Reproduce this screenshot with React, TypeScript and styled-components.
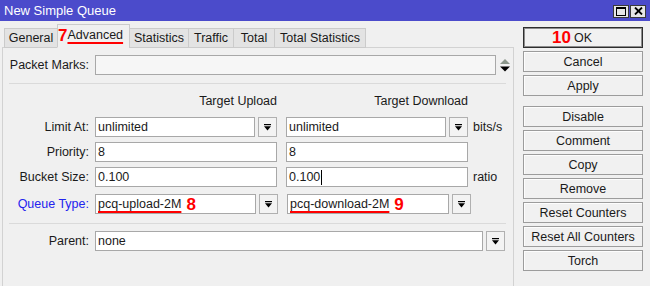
import React from 'react'
import styled, { createGlobalStyle } from 'styled-components'

const GlobalStyle = createGlobalStyle`
  html, body {
    margin: 0;
    padding: 0;
    background: #f0f0f0;
    overflow: hidden;
  }
  body {
    font-family: "Liberation Sans", Arial, sans-serif;
    font-size: 12.5px;
    color: #1a1a1a;
  }
`

const Window = styled.div`
  width: 650px;
  height: 286px;
  display: flex;
  flex-direction: column;
  background: #f0f0f0;
  overflow: hidden;
`

const TitleBar = styled.div`
  height: 21px;
  flex-shrink: 0;
  background: #4b4bcb;
  color: #fff;
  display: flex;
  align-items: center;
  justify-content: space-between;
  padding: 0 4px 0 4px;
`

const TitleText = styled.span`
  font-size: 13px;
`

const WinButtons = styled.div`
  display: flex;
  gap: 1px;
  margin-top: 1px;
`

const WinButton = styled.div`
  width: 14px;
  height: 11px;
  background: #e6e6e6;
  border: 1px solid #3a3a3a;
  display: flex;
  align-items: center;
  justify-content: center;
`

const Body = styled.div`
  flex: 1;
  display: flex;
  gap: 9px;
  padding-left: 2px;
  min-height: 0;
`

const Main = styled.div`
  width: 512px;
  display: flex;
  flex-direction: column;
`

const TabRow = styled.div`
  height: 27px;
  flex-shrink: 0;
  display: flex;
  align-items: flex-end;
  padding-left: 3px;
  margin-bottom: -1px;
  position: relative;
  z-index: 1;
`

const Tab = styled.div<{ $w: number; $active?: boolean }>`
  width: ${p => p.$w}px;
  height: ${p => (p.$active ? 24 : 20)}px;
  box-sizing: border-box;
  margin-left: -1px;
  display: flex;
  align-items: center;
  justify-content: ${p => (p.$active ? 'flex-start' : 'center')};
  background: ${p => (p.$active ? '#f0f0f0' : '#e3e3e3')};
  border: 1px solid #cbcbcb;
  border-bottom: ${p => (p.$active ? '1px solid #f0f0f0' : '1px solid #cbcbcb')};
  padding-bottom: ${p => (p.$active ? 2 : 0)}px;
  white-space: nowrap;
`

const Marker = styled.span`
  color: #ff0000;
  font-weight: bold;
  font-size: 17px;
  line-height: 1;
`

const FloatMarker = styled(Marker)`
  position: absolute;
  right: calc(100% + 3px);
  top: 50%;
  transform: translateY(-52%);
`

const Marked = styled.span`
  text-decoration-line: underline;
  text-decoration-color: #ff0000;
  text-decoration-thickness: 2px;
  text-underline-offset: 3px;
  text-decoration-skip-ink: none;
`

const Panel = styled.div`
  flex: 1;
  border: 1px solid #d2d2d2;
  border-bottom: none;
  background: #f0f0f0;
  padding-top: 7px;
  display: flex;
  flex-direction: column;
`

const FieldRow = styled.div<{ $mt?: number }>`
  height: 20px;
  margin-top: ${p => p.$mt ?? 0}px;
  display: flex;
  align-items: center;
`

const Label = styled.div<{ $link?: boolean }>`
  width: 86px;
  margin-right: 6px;
  flex-shrink: 0;
  text-align: right;
  white-space: nowrap;
  color: ${p => (p.$link ? '#2323ee' : '#1a1a1a')};
`

const Col = styled.div<{ $w: number; $ml?: number }>`
  width: ${p => p.$w}px;
  margin-left: ${p => p.$ml ?? 0}px;
  height: 100%;
  display: flex;
  gap: 3px;
  flex-shrink: 0;
`

const ColHead = styled.div<{ $w: number; $ml?: number }>`
  width: ${p => p.$w}px;
  margin-left: ${p => p.$ml ?? 0}px;
  text-align: right;
  white-space: nowrap;
`

const TextBox = styled.div<{ $empty?: boolean }>`
  flex: 1;
  height: 20px;
  box-sizing: border-box;
  border: 1px solid #a8a8a8;
  background: ${p => (p.$empty ? '#f6f6f6' : '#fff')};
  padding-left: 2px;
  display: flex;
  align-items: center;
  white-space: nowrap;
  overflow: hidden;
`

const DropButton = styled.div`
  width: 19px;
  height: 20px;
  box-sizing: border-box;
  flex-shrink: 0;
  border: 1px solid #b0b0b0;
  background: #f3f3f3;
  display: flex;
  align-items: center;
  justify-content: center;
`

const Spinner = styled.div`
  width: 17px;
  height: 20px;
  display: flex;
  align-items: center;
  justify-content: center;
`

const Unit = styled.span`
  margin-left: 5px;
`

const Caret = styled.span`
  display: inline-block;
  width: 1px;
  height: 15px;
  background: #000;
  margin-left: 1px;
`

const Divider = styled.div<{ $mt: number }>`
  height: 1px;
  background: #dadada;
  margin: ${p => p.$mt}px 7px 0 6px;
`

const Side = styled.div`
  width: 120px;
  display: flex;
  flex-direction: column;
  gap: 3px;
  padding-top: 6px;
`

const SideButton = styled.div<{ $default?: boolean; $mt?: number }>`
  height: 21px;
  box-sizing: border-box;
  margin-top: ${p => p.$mt ?? 0}px;
  border: 1px solid ${p => (p.$default ? '#2e2e2e' : '#9c9c9c')};
  box-shadow: ${p => (p.$default ? 'inset 0 0 0 1px #8c8c8c' : 'inset 1px 1px 0 #fdfdfd')};
  background: #f1f1f1;
  display: flex;
  align-items: center;
  justify-content: center;
  white-space: nowrap;
`

const ButtonText = styled.span`
  position: relative;
`

const DropIcon = () => (
  <svg width="7" height="7" viewBox="0 0 7 7">
    <rect x="0" y="0" width="7" height="1.2" fill="#000" />
    <polygon points="0,2.2 7,2.2 3.5,6.4" fill="#000" />
  </svg>
)

const SpinIcon = () => (
  <svg width="10" height="13" viewBox="0 0 10 13">
    <polygon points="0,5 10,5 5,0" fill="#8b968b" />
    <polygon points="0,7.5 10,7.5 5,12.5" fill="#000" />
  </svg>
)

const MaxIcon = () => (
  <svg width="10" height="9" viewBox="0 0 10 9">
    <rect x="0.5" y="0.5" width="9" height="8" fill="none" stroke="#000" />
    <rect x="0" y="0" width="10" height="2" fill="#000" />
  </svg>
)

const CloseIcon = () => (
  <svg width="9" height="8" viewBox="0 0 9 8">
    <path d="M1 0.5 L8 7.5 M8 0.5 L1 7.5" stroke="#000" strokeWidth="1.8" />
  </svg>
)

const tabs = [
  { name: 'General', w: 54 },
  { name: 'Advanced', w: 73, active: true },
  { name: 'Statistics', w: 60 },
  { name: 'Traffic', w: 46 },
  { name: 'Total', w: 42 },
  { name: 'Total Statistics', w: 92 },
]

const buttons = ['Cancel', 'Apply', 'Disable', 'Comment', 'Copy', 'Remove', 'Reset Counters', 'Reset All Counters', 'Torch']

const PairRow = ({ label, up, down, drop, unit, mt, caret }: any) => (
  <FieldRow $mt={mt}>
    <Label>{label}</Label>
    <Col $w={182}>
      <TextBox>{up}</TextBox>
      {drop && <DropButton><DropIcon /></DropButton>}
    </Col>
    <Col $w={182} $ml={9}>
      <TextBox>{down}{caret && <Caret />}</TextBox>
      {drop && <DropButton><DropIcon /></DropButton>}
    </Col>
    {unit && <Unit>{unit}</Unit>}
  </FieldRow>
)

export default function App() {
  return (
    <Window>
      <GlobalStyle />
      <TitleBar>
        <TitleText>New Simple Queue</TitleText>
        <WinButtons>
          <WinButton><MaxIcon /></WinButton>
          <WinButton><CloseIcon /></WinButton>
        </WinButtons>
      </TitleBar>
      <Body>
        <Main>
          <TabRow>
            {tabs.map(t => (
              <Tab key={t.name} $w={t.w} $active={t.active}>
                {t.active ? (
                  <>
                    <Marker>7</Marker>
                    <Marked>{t.name}</Marked>
                  </>
                ) : t.name}
              </Tab>
            ))}
          </TabRow>
          <Panel>
            <FieldRow>
              <Label>Packet Marks:</Label>
              <TextBox $empty />
              <Spinner><SpinIcon /></Spinner>
            </FieldRow>
            <Divider $mt={8} />
            <FieldRow $mt={7}>
              <Label />
              <ColHead $w={182}>Target Upload</ColHead>
              <ColHead $w={182} $ml={9}>Target Download</ColHead>
            </FieldRow>
            <PairRow label="Limit At:" up="unlimited" down="unlimited" drop unit="bits/s" mt={6} />
            <PairRow label="Priority:" up="8" down="8" mt={5} />
            <PairRow label="Bucket Size:" up="0.100" down="0.100" unit="ratio" mt={5} caret />
            <FieldRow $mt={7}>
              <Label $link>Queue Type:</Label>
              <Col $w={183}>
                <TextBox>
                  <Marked>pcq-upload-2M</Marked>
                  <Marker style={{ marginLeft: 5 }}>8</Marker>
                </TextBox>
                <DropButton><DropIcon /></DropButton>
              </Col>
              <Col $w={184} $ml={9}>
                <TextBox>
                  <Marked>pcq-download-2M</Marked>
                  <Marker style={{ marginLeft: 5 }}>9</Marker>
                </TextBox>
                <DropButton><DropIcon /></DropButton>
              </Col>
            </FieldRow>
            <Divider $mt={9} />
            <FieldRow $mt={7}>
              <Label>Parent:</Label>
              <Col $w={410}>
                <TextBox>none</TextBox>
                <DropButton><DropIcon /></DropButton>
              </Col>
            </FieldRow>
          </Panel>
        </Main>
        <Side>
          <SideButton $default>
            <ButtonText>
              <FloatMarker>10</FloatMarker>
              OK
            </ButtonText>
          </SideButton>
          {buttons.map(b => (
            <SideButton key={b} $mt={b === 'Disable' ? 7 : 0}>{b}</SideButton>
          ))}
        </Side>
      </Body>
    </Window>
  )
}
